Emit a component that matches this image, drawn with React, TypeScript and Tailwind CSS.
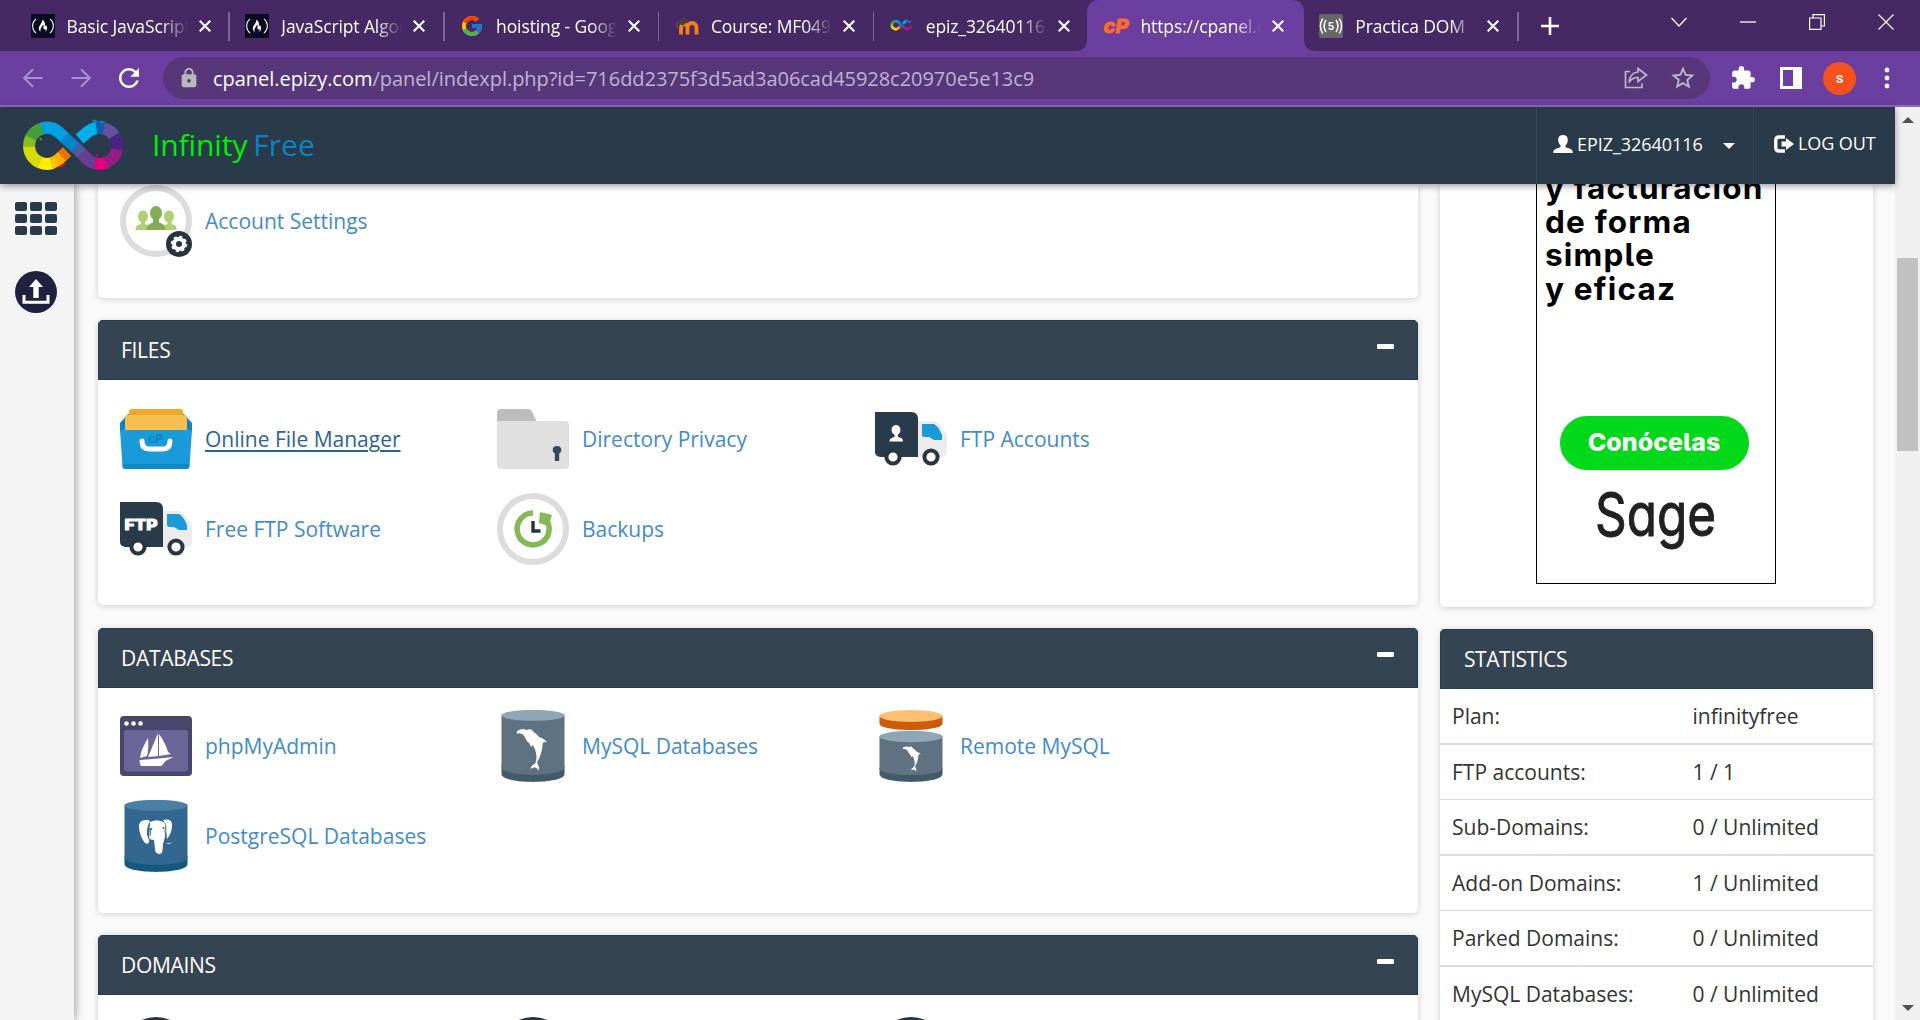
import React from "react";
import { FaFreeCodeCamp } from "react-icons/fa";
import { FcGoogle } from "react-icons/fc";
import { MdExtension, MdLock, MdStarBorder, MdRefresh } from "react-icons/md";

/* ---------- logo ---------- */

function arc(cx: number, cy: number, r: number, a0: number, a1: number) {
  const p = (a: number) => {
    const t = (a * Math.PI) / 180;
    return `${(cx + r * Math.cos(t)).toFixed(2)} ${(cy + r * Math.sin(t)).toFixed(2)}`;
  };
  return `M${p(a0)} A${r} ${r} 0 0 ${a1 > a0 ? 1 : 0} ${p(a1)}`;
}

const leftRing: [number, number, string][] = [
  [-155, -105, "#43a038"],
  [-183, -154, "#86bd26"],
  [-248, -182, "#d6dc00"],
  [75, 113, "#ffec00"],
  [52, 76, "#fbc400"],
];
const rightRing: [number, number, string][] = [
  [-132, -98, "#00b0ec"],
  [-99, -74, "#0a5fae"],
  [-76, -30, "#64519f"],
  [-34, 12, "#4a2483"],
  [11, 68, "#961b82"],
  [67, 104, "#e2007f"],
  [103, 132, "#6a3c92"],
];

function InfinityMark({ className }: { className?: string }) {
  return (
    <svg viewBox="34 32 326 164" className={className} fill="none" strokeWidth={36}>
      {leftRing.map(([a, b, c]) => (
        <path key={c} d={arc(112, 115, 54, a, b)} stroke={c} />
      ))}
      {rightRing.map(([a, b, c]) => (
        <path key={c} d={arc(268, 115, 54, a, b)} stroke={c} />
      ))}
      <path d="M142 160L158 145" stroke="#fbb000" />
      <path d="M156 147L172 132" stroke="#ee7203" />
      <path d={arc(112, 115, 54, -107, -48)} stroke="#009fe3" />
      <path d="M146 73L166 92" stroke="#009fe3" />
      <path d="M164 90L199 122" stroke="#0086c8" />
      <path d="M197 120L216 139" stroke="#4c5a9e" />
      <path d="M215 138L234 157" stroke="#6a3c92" />
      <path d="M209 94L234 73" stroke="#00b0ec" />
      <path d="M134 182l36-18-8 13-22 5z" fill="#d3151d" stroke="none" />
      <path d="M245 41l8-5 10 4-4 6zM262 43l15-3 9 3-6 5z" fill="#0a84c4" stroke="none" />
      <path d="M346 131l10-1-7 7z" fill="#80207e" stroke="none" />
      <path d="M256 145l10-6-2 9z" fill="#e2007f" stroke="none" />
      <path d="M87 91l9 3-1 6z" fill="#86bd26" stroke="none" />
    </svg>
  );
}

/* ---------- browser chrome ---------- */

function CampIcon() {
  return (
    <span className="flex size-6 items-center justify-center bg-[#0a0a23] text-white">
      <FaFreeCodeCamp size={22} />
    </span>
  );
}

function MoodleIcon() {
  return (
    <svg viewBox="0 0 24 24" className="size-6" fill="none">
      <path d="M6 20.500V13.500a3 3 0 0 1 6.500 0v7M12.500 20.500v-7a4 4 0 0 1 9 0v7" stroke="#f98012" strokeWidth="3.800" />
      <path d="M1 8.500L9 3.500l5 3-6 5z" fill="#4a4038" />
      <path d="M2 8.500v6" stroke="#5d4a66" strokeWidth="1.500" />
    </svg>
  );
}

function CpanelIcon() {
  return (
    <svg viewBox="0 0 24 24" className="size-6 overflow-visible">
      <text x="-0.500" y="18.500" textLength="25" lengthAdjust="spacingAndGlyphs" fill="#ff6c2c" stroke="#ff6c2c" strokeWidth="0.800" className="font-['Inter'] text-[19px] font-extrabold italic">cP</text>
    </svg>
  );
}

function RadioIcon() {
  return (
    <svg viewBox="0 0 24 24" className="size-6" fill="none" stroke="#fff" strokeWidth="1.500">
      <rect width="24" height="24" rx="2" fill="#666" stroke="none" />
      <path d="M3.800 4.500c-3.200 5-3.200 10 0 15M7 6c-2.600 4-2.600 8 0 12M20.200 4.500c3.200 5 3.200 10 0 15M17 6c2.600 4 2.600 8 0 12" />
      <text x="12" y="15.500" textAnchor="middle" fill="#fff" stroke="none" className="font-['Inter'] text-[10px] font-bold">5</text>
    </svg>
  );
}

const tabs = [
  { title: "Basic JavaScript", icon: <CampIcon /> },
  { title: "JavaScript Algorithms", icon: <CampIcon /> },
  { title: "hoisting - Google", icon: <FcGoogle size={24} /> },
  { title: "Course: MF0492", icon: <MoodleIcon /> },
  { title: "epiz_32640116 |", icon: <InfinityMark className="w-6" /> },
  { title: "https://cpanel.epizy", icon: <CpanelIcon />, active: true },
  { title: "Practica DOM", icon: <RadioIcon /> },
];

function Cross() {
  return (
    <svg viewBox="0 0 12 12" className="size-3" stroke="#fff" strokeWidth="2.100">
      <path d="M0.700 0.700l10.600 10.600M11.300 0.700L0.700 11.300" />
    </svg>
  );
}

function Tab({ title, icon, active, bar }: { title: string; icon: React.ReactNode; active?: boolean; bar: boolean }) {
  return (
    <div className="relative h-[51px] w-[214.800px] shrink-0">
      {active && (
        <svg viewBox="0 0 241 51" className="absolute -left-[14px] top-0 h-[51px] w-[241px]">
          <path d="M0 51c8 0 12-4 12-12V12C12 4 17 0 24 0H217c8 0 12 5 12 12V39c0 8 4 12 12 12z" fill="#6b3fa0" />
        </svg>
      )}
      <div className="relative flex h-full items-center pl-[15.500px]">
        <div className="flex size-6 shrink-0 items-center">{icon}</div>
        <div className="ml-3 w-[121px] overflow-hidden whitespace-nowrap text-[17.500px] leading-6 tracking-[-0.120px] text-white [mask-image:linear-gradient(to_right,#000_78%,transparent)]">{title}</div>
        <div className="ml-[11px]"><Cross /></div>
      </div>
      {bar && <div className="absolute right-0 top-[12px] h-[29px] w-[1.500px] bg-[#7d6896]" />}
    </div>
  );
}

function TabStrip() {
  return (
    <div className="flex h-[51px] bg-[#462964] pl-[15px]">
      {tabs.map((t, i) => (
        <Tab key={t.title} {...t} bar={i !== 4 && i !== 5} />
      ))}
      <svg viewBox="0 0 18 18" className="ml-[22px] mt-[17px] size-[18px] shrink-0" stroke="#fff" strokeWidth="2.600">
        <path d="M9 0v18M0 9h18" />
      </svg>
      <div className="ml-auto mr-[26px] flex items-center gap-[53px] pb-[8px] text-white">
        <svg viewBox="0 0 16 10" className="w-4" fill="none" stroke="currentColor" strokeWidth="1.200"><path d="M0.500 1L8 9l7.500-8" /></svg>
        <svg viewBox="0 0 16 16" className="w-4" stroke="currentColor" strokeWidth="1.300"><path d="M0 8h16" /></svg>
        <svg viewBox="0 0 16 16" className="w-4" fill="none" stroke="currentColor" strokeWidth="1.200"><path d="M0.600 4h11.400v11.400H0.600zM4 4V0.600h11.400V12H12" /></svg>
        <svg viewBox="0 0 16 16" className="w-4" stroke="currentColor" strokeWidth="1.200"><path d="M0.500 0.500l15 15M15.500 0.500l-15 15" /></svg>
      </div>
    </div>
  );
}

function Toolbar() {
  return (
    <div className="flex h-[56px] items-center border-b-2 border-[#8f6db8] bg-[#6b3fa0] pl-[23px]">
      <svg viewBox="0 0 20 20" className="size-5" fill="none" stroke="#ab90cb" strokeWidth="2"><path d="M19.500 10H1.500M10 1.200L1.200 10l8.800 8.800" /></svg>
      <svg viewBox="0 0 20 20" className="ml-[28px] size-5" fill="none" stroke="#ab90cb" strokeWidth="2"><path d="M0.500 10h18M10 1.200l8.800 8.800-8.800 8.800" /></svg>
      <MdRefresh size={30} color="#fff" className="ml-[23px]" />
      <div className="ml-[19px] flex h-[42px] w-[1547px] items-center rounded-full bg-[#57377a] pl-[15px] pr-[13px]">
        <MdLock size={22} color="#b9b6bd" />
        <div className="ml-[13px] mt-[2px] whitespace-nowrap text-[20px] tracking-[-0.040px] text-[#c1b2d2]">
          <span className="text-white">cpanel.epizy.com</span>/panel/indexpl.php?id=716dd2375f3d5ad3a06cad45928c20970e5e13c9
        </div>
        <svg viewBox="0 0 24 22" className="ml-auto h-[22px] w-6" fill="none" stroke="#bfb7c6" strokeWidth="1.700">
          <path d="M6 4.500H1.500v16h16.500v-4" />
          <path d="M14 1.500l8.500 6.500-8.500 6.500v-4c-4 0-7 1.500-9 5 .5-6 3.500-10 9-10.500z" />
        </svg>
        <MdStarBorder size={28} color="#bfb7c6" className="ml-[21px]" />
      </div>
      <MdExtension size={26} color="#fff" className="ml-[20px]" />
      <svg viewBox="0 0 22 22" className="ml-[24px] size-[22px]"><path d="M0 0h22v22H0zM3 3v16h10V3z" fill="#fff" fillRule="evenodd" /></svg>
      <div className="ml-[21px] flex size-[33px] items-center justify-center rounded-full bg-[#f4511e] text-[15px] font-medium text-white font-['Roboto']">s</div>
      <svg viewBox="0 0 6 22" className="ml-[28px] h-[22px] w-[6px]" fill="#fff"><circle cx="3" cy="3" r="2.400" /><circle cx="3" cy="11" r="2.400" /><circle cx="3" cy="19" r="2.400" /></svg>
    </div>
  );
}

/* ---------- feature icons, 72 x 72 ---------- */

function Box({ children }: { children: React.ReactNode }) {
  return <svg viewBox="0 0 72 72" className="size-[72px] shrink-0">{children}</svg>;
}

const Ring = () => <circle cx="36" cy="36" r="33" fill="none" stroke="#dcdcdc" strokeWidth="6" />;

function AccountIcon() {
  return (
    <Box>
      <Ring />
      <g fill="#afd075">
        <ellipse cx="23" cy="31.500" rx="5" ry="6" /><path d="M15.500 45c0-4 2-5 5.500-6v-3h4v3c4 1 5 2 5 6z" />
        <ellipse cx="49" cy="31.500" rx="5" ry="6" /><path d="M42 45c0-4 2-5 5.500-6v-3h4v3c4 1 5 2 5 6z" />
      </g>
      <g fill="#84ac54"><ellipse cx="36" cy="28" rx="6" ry="7" /><path d="M26.500 45c0-5 3-6 6.500-7.500v-4h6v4c4 1.500 6.500 2.500 6.500 7.500z" /></g>
      <circle cx="59" cy="59" r="13" fill="#27343f" />
      <circle cx="59" cy="59" r="7" fill="#fff" />
      <circle cx="59" cy="59" r="7" fill="none" stroke="#fff" strokeWidth="2.500" strokeDasharray="3 2.500" />
      <circle cx="59" cy="59" r="3" fill="#27343f" />
    </Box>
  );
}

function DrawerIcon() {
  return (
    <Box>
      <path d="M0 20l8-9h56l8 9v9H0z" fill="#0e84be" />
      <path d="M9 9q0-3 3-3h48q3 0 3 3v4H9z" fill="#efa72c" />
      <path d="M5 14q0-2 2-2h58q2 0 2 2v14H5z" fill="#f7be50" />
      <path d="M0 27h72l-2.500 36q0 3-3 3h-61q-3 0-3-3z" fill="#1a9ad9" />
      <path d="M2.700 61h66.600v2q0 3-3 3h-60.600q-3 0-3-3z" fill="#0f8ac6" />
      <text x="28" y="40" fill="#0e84be" className="font-['Inter'] text-[12px] font-bold italic">cP</text>
      <path d="M22 38q0 8 7 8h14q7 0 7-8" fill="none" stroke="#fff" strokeWidth="5" strokeLinecap="round" />
    </Box>
  );
}

function Truck({ children }: { children: React.ReactNode }) {
  return (
    <Box>
      <path d="M43 18h16q3 0 5 3l7 9q1 2 1 4v14q0 6-6 6H43z" fill="#ececec" />
      <path d="M0 9h36q7 0 7 7v38H5q-5-1-5-5z" fill="#293a4a" />
      <path d="M47 21h12q5 3 8 11v5h-8l-5-3h-5q-2 0-2-2z" fill="#1a9ad9" />
      <circle cx="18" cy="54" r="6.600" fill="#fff" stroke="#293642" strokeWidth="4" />
      <circle cx="56" cy="54" r="6.600" fill="#fff" stroke="#293642" strokeWidth="4" />
      {children}
    </Box>
  );
}

function FtpUserIcon() {
  return (
    <Truck>
      <ellipse cx="21" cy="27" rx="4.500" ry="5" fill="#fff" />
      <path d="M14.500 38.500c0-3 2-3.500 5-4.500v-4h3.500v4c3.500 1 5 1.500 5 4.500z" fill="#fff" />
    </Truck>
  );
}

function FtpTextIcon() {
  return (
    <Truck>
      <text x="4.500" y="37" textLength="33" lengthAdjust="spacingAndGlyphs" fill="#fff" stroke="#fff" strokeWidth="1" strokeLinejoin="round" className="font-['Inter'] text-[15px] font-extrabold">FTP</text>
    </Truck>
  );
}

function FolderIcon() {
  return (
    <Box>
      <path d="M0 10q0-4 4-4h26q4 0 5 3l4 8q1 3 4 4H0z" fill="#bcbcbc" />
      <path d="M0 18h68q4 0 4 4v40q0 4-4 4H4q-4 0-4-4z" fill="#e0e0e0" />
      <path d="M60 43a4 4 0 0 1 2.200 7.500V58h-4.400v-7.500A4 4 0 0 1 60 43z" fill="#34495a" />
    </Box>
  );
}

function BackupIcon() {
  return (
    <Box>
      <Ring />
      <path d="M36 20A16 16 0 1 0 49 26.500" fill="none" stroke="#86b857" strokeWidth="5.500" />
      <path d="M43 19l12 3-4 11-9-3z" fill="#86b857" />
      <path d="M36 28v10h7.500" fill="none" stroke="#27343f" strokeWidth="3.400" />
    </Box>
  );
}

function PhpMyAdminIcon() {
  return (
    <Box>
      <rect y="6" width="72" height="60" rx="4" fill="#49466e" />
      <rect x="4" y="20" width="64" height="41.500" rx="3" fill="#6a6698" />
      <g fill="#fff"><circle cx="6.500" cy="13.500" r="2.300" /><circle cx="13.500" cy="13.500" r="2.300" /><circle cx="20.500" cy="13.500" r="2.300" />
        <path d="M28 28q1 10-1 18l-7 2q1-9 8-20z" />
        <path d="M38 23v23l-10 1q5-12 10-24z" />
        <path d="M39 24q6 8 9 18l3 2q-6 1-12 2z" />
        <path d="M19.500 50q16-1 34-3l-8 4-4 5H21q-1.500-2-1.500-6z" /></g>
    </Box>
  );
}

function Cylinder({ top, body, base, children }: { top: string; body: string; base: string; children?: React.ReactNode }) {
  return (
    <>
      <path d="M4.500 56v8c0 10.500 63 10.500 63 0v-8z" fill={base} />
      <path d="M4.500 5v53c4 9 59 9 63 0V5z" fill={body} />
      <ellipse cx="36" cy="5.300" rx="31.500" ry="5.500" fill={top} />
      {children}
    </>
  );
}

/* Silhouette drawn on a 270-unit grid, three units to a pixel. */
const Dolphin = () => (
  <path transform="translate(-7.500 -10) scale(.3333)" fill="#fff" d="M82 94q8-7 20-7l10 3 6-2q12 0 12 6 12 8 20 18 10 2 23 15-7-3-13 1-1 22-7 37-4 12-10 20 1 8 6 17l-1 10q-5-8-12-10l-13 4q1-8 10-13 5-2 6-8 5-18-3-38-3-8-8-13l-3 8-6-13q-5-2-9-10-4-12-12-17-8-4-16-1z" />
);

function MysqlIcon() {
  return <Box><Cylinder top="#8fa6b7" body="#5e7282" base="#455a69"><Dolphin /></Cylinder></Box>;
}

function RemoteMysqlIcon() {
  return (
    <Box>
      <path d="M4.500 6v8c3 8 60 8 63 0V6z" fill="#cf5a0c" />
      <ellipse cx="36" cy="6" rx="31.500" ry="6" fill="#ffbf73" />
      <path d="M4.500 58v6c0 10.500 63 10.500 63 0v-6z" fill="#455a69" />
      <path d="M4.500 26v33c4 8 59 8 63 0V26z" fill="#5e7282" />
      <ellipse cx="36" cy="26.500" rx="31.500" ry="5.800" fill="#8fa6b7" />
      <g transform="translate(16 25) scale(.6)"><Dolphin /></g>
    </Box>
  );
}

function PostgresIcon() {
  return (
    <Box>
      <Cylinder top="#4a80a6" body="#336790" base="#155a7e">
        <g fill="#fff">
          <path d="M28 20q-10-1-9 8 1 9 6 15 3 2 4-1 1-2-1-4-3-8 2-17z" />
          <path d="M30 22q8-4 15 1 2 7 0 14l-2 7q0 10-3 10-5 0-5-5l-1-9q-5 0-5-3z" />
          <path d="M43 20q9-2 9 5 0 8-5 14-1-10-1-15z" />
          <path d="M45 43q4 1 7-1-1 2-4 2z" />
        </g>
        <g fill="#336790"><ellipse cx="31" cy="29" rx="1.300" ry="1" /><ellipse cx="43.500" cy="28" rx="1" ry="1" /></g>
        <path d="M30 28q1 4 0 8M46 26q-2 5 0 10" stroke="#336790" strokeWidth="1" fill="none" />
      </Cylinder>
    </Box>
  );
}

const DomainIcon = () => <Box><circle cx="36" cy="36" r="36" fill="#27343f" /></Box>;

/* ---------- page ---------- */

type Item = { label: string; icon: React.ReactNode; hover?: boolean };

function Section({ title, items, className }: { title: string; items: Item[]; className: string }) {
  return (
    <section className={`${className} overflow-hidden rounded-[5px] bg-white shadow-[0_1px_6px_rgba(0,0,0,0.18)]`}>
      <header className="flex h-[60px] shrink-0 items-center justify-between border border-[#293a4a] bg-[#354453] pl-[22px] pr-[23px] text-white">
        <h2 className="pt-[2px] text-[21px] tracking-[-0.300px]">{title}</h2>
        <span className="mb-[8px] h-[5px] w-[17px] rounded-[1px] bg-white" />
      </header>
      <Items items={items} />
    </section>
  );
}

function Items({ items }: { items: Item[] }) {
  return (
    <div className="grid grid-cols-[377px_378px_377px] gap-y-[18px] pl-[22px] pt-[22px]">
      {items.map((it) => (
        <a key={it.label} className={it.hover ? "flex items-center gap-[13px] text-[#2a6496]" : "flex items-center gap-[13px] text-[#428bca]"}>
          {it.icon}
          <span className={it.hover ? "whitespace-nowrap pt-[2px] text-[21px] underline decoration-2 underline-offset-[3px]" : "whitespace-nowrap pt-[2px] text-[21px]"}>{it.label}</span>
        </a>
      ))}
    </div>
  );
}

const files: Item[] = [
  { label: "Online File Manager", icon: <DrawerIcon />, hover: true },
  { label: "Directory Privacy", icon: <FolderIcon /> },
  { label: "FTP Accounts", icon: <FtpUserIcon /> },
  { label: "Free FTP Software", icon: <FtpTextIcon /> },
  { label: "Backups", icon: <BackupIcon /> },
];
const databases: Item[] = [
  { label: "phpMyAdmin", icon: <PhpMyAdminIcon /> },
  { label: "MySQL Databases", icon: <MysqlIcon /> },
  { label: "Remote MySQL", icon: <RemoteMysqlIcon /> },
  { label: "PostgreSQL Databases", icon: <PostgresIcon /> },
];
const domains: Item[] = [
  { label: "Addon Domains", icon: <DomainIcon /> },
  { label: "Parked Domains", icon: <DomainIcon /> },
  { label: "Sub Domains", icon: <DomainIcon /> },
];
const stats = [
  ["Plan:", "infinityfree"],
  ["FTP accounts:", "1 / 1"],
  ["Sub-Domains:", "0 / Unlimited"],
  ["Add-on Domains:", "1 / Unlimited"],
  ["Parked Domains:", "0 / Unlimited"],
  ["MySQL Databases:", "0 / Unlimited"],
];

function SiteHeader() {
  return (
    <header className="relative z-10 flex h-[77px] shrink-0 items-center bg-[#293a4a] text-white shadow-[0_2px_7px_rgba(0,0,0,0.4)]">
      <InfinityMark className="ml-[21px] h-[55px] w-[109px]" />
      <div className="ml-[22px] flex gap-[6px] whitespace-nowrap pb-[2px] text-[30px] leading-[40px] font-['Open_Sans']">
        <span className="tracking-[-0.100px] text-[#00f000]">Infinity</span>
        <span className="text-[#0a84c4]">Free</span>
      </div>
      <div className="ml-auto flex h-full w-[217px] items-center border-l border-[#34475a] pb-[3px] pl-4">
        <svg viewBox="0 0 20 18" className="h-[18px] w-5" fill="#fff"><path d="M10 0c4 0 5.200 3 4.700 6-.3 2-1 3.300-2.200 4.500v1.500c2.500 1.300 6.500 2 7 4l.3 2H.2l.3-2c.5-2 4.500-2.700 7-4v-1.500C6.300 9.300 5.600 8 5.300 6 4.800 3 6 0 10 0z" /></svg>
        <span className="ml-1 whitespace-nowrap text-[18px] tracking-[-0.050px]">EPIZ_32640116</span>
        <svg viewBox="0 0 12 6" className="ml-[20px] mt-[3px] h-[6px] w-3" fill="#fff"><path d="M0 0h12L6 6z" /></svg>
      </div>
      <div className="flex h-full w-[142px] items-center border-l border-[#34475a] pb-[4px] pl-[20px]">
        <svg viewBox="0 0 20 18" className="h-[18px] w-5" fill="none"><path d="M11 2H5Q1.800 2 1.800 5v8q0 3 3.200 3h6" stroke="#fff" strokeWidth="3.400" /><path d="M7.500 6.500H12V3l8 6-8 6v-3.500H7.500z" fill="#fff" /></svg>
        <span className="ml-1 whitespace-nowrap text-[18px] tracking-[-0.100px]">LOG OUT</span>
      </div>
    </header>
  );
}

function SideNav() {
  return (
    <nav className="flex w-[74px] shrink-0 flex-col items-center bg-[#f4f4f4] pr-[2px] pt-[18px] shadow-[1px_0_9px_rgba(0,0,0,0.4)]">
      <div className="grid grid-cols-3 gap-[3px]">
        {Array.from({ length: 9 }, (_, i) => <span key={i} className="h-[9px] w-[12px] rounded-[2px] bg-[#293a4a]" />)}
      </div>
      <svg viewBox="0 0 42 42" className="mt-[36px] size-[42px]">
        <circle cx="21" cy="21" r="21" fill="#20203f" />
        <path d="M21 8l7 8h-4.300v11h-5.400V16H14z" fill="#fff" />
        <path d="M9 24v7.300h24V24" fill="none" stroke="#fff" strokeWidth="3" />
      </svg>
    </nav>
  );
}

function Advert() {
  return (
    <div className="flex h-[423px] flex-col items-center overflow-hidden rounded-b-[5px] bg-white shadow-[0_1px_6px_rgba(0,0,0,0.18)]">
      <div className="ml-[-1px] flex h-[400px] w-[240px] flex-col items-center border border-t-0 border-black font-['Inter'] [font-feature-settings:'cv05']">
        <p className="mt-[-13px] w-full whitespace-nowrap pl-2 text-[31.500px] font-bold leading-[33.700px] tracking-[1.200px] text-black">
          y facturación<br />de forma<br />simple<br />y eficaz
        </p>
        <div className="ml-[-4px] mt-[110px] flex h-[54px] w-[189px] items-center justify-center rounded-full bg-[#00d919] text-[25px] font-extrabold text-white">Conócelas</div>
        <svg viewBox="0 0 122 80" className="mt-3 h-[80px] w-[122px] overflow-visible">
          <text x="0" y="54" textLength="121" lengthAdjust="spacingAndGlyphs" fill="#212121" stroke="#212121" strokeWidth="1" strokeLinejoin="round" className="font-['Inter'] text-[60px] [font-feature-settings:'cv11']">Sage</text>
        </svg>
      </div>
    </div>
  );
}

function Statistics() {
  return (
    <section className="mt-[22px] h-[460px] overflow-hidden rounded-[5px] bg-white shadow-[0_1px_6px_rgba(0,0,0,0.18)]">
      <h2 className="flex h-[60px] items-center border border-[#293a4a] bg-[#354453] pl-[23px] pt-[2px] text-[21px] tracking-[-0.450px] text-white">STATISTICS</h2>
      {stats.map(([k, v], i) => (
        <div
          key={k}
          className={
            i % 2 === 0
              ? "flex h-[56px] items-center border-b-2 border-[#ddd] pl-3 pt-[2px] text-[21px] text-[#333]"
              : "flex h-[55px] items-center border-b border-[#ddd] pl-3 pt-[2px] text-[21px] text-[#333]"
          }
        >
          <span className="w-[240.500px]">{k}</span>
          <span>{v}</span>
        </div>
      ))}
    </section>
  );
}

function Scrollbar() {
  return (
    <div className="flex w-[25px] shrink-0 flex-col items-center bg-[#f0f0f0] pt-[10px]">
      <svg viewBox="0 0 12 6" className="h-[6px] w-[12px]" fill="#505050"><path d="M0 6h12L6 0z" /></svg>
      <div className="mt-[135px] h-[193px] w-[21px] bg-[#c1c1c1]" />
      <svg viewBox="0 0 12 6" className="mb-[9px] mt-auto h-[6px] w-[12px]" fill="#505050"><path d="M0 0h12L6 6z" /></svg>
    </div>
  );
}

export default function App() {
  return (
    <div className="flex h-[1020px] w-[1920px] flex-col overflow-hidden bg-[#fafafa] font-['Open_Sans','Noto_Sans',sans-serif]">
      <TabStrip />
      <Toolbar />
      <div className="flex min-h-0 flex-1">
        <div className="flex min-w-0 flex-1 flex-col">
          <SiteHeader />
          <div className="flex min-h-0 flex-1">
            <SideNav />
            <main className="ml-[24px] w-[1320px] shrink-0">
              <section className="h-[114px] overflow-hidden rounded-b-[5px] bg-white shadow-[0_1px_6px_rgba(0,0,0,0.18)]">
                <div className="mt-[-21px]"><Items items={[{ label: "Account Settings", icon: <AccountIcon /> }]} /></div>
              </section>
              <Section title="FILES" items={files} className="mt-[22px] h-[285px] [&>div]:pt-[23px]" />
              <Section title="DATABASES" items={databases} className="mt-[23px] h-[285px]" />
              <Section title="DOMAINS" items={domains} className="mt-[22px] h-[285px]" />
            </main>
            <aside className="ml-[22px] w-[433px] shrink-0">
              <Advert />
              <Statistics />
            </aside>
          </div>
        </div>
        <Scrollbar />
      </div>
    </div>
  );
}
